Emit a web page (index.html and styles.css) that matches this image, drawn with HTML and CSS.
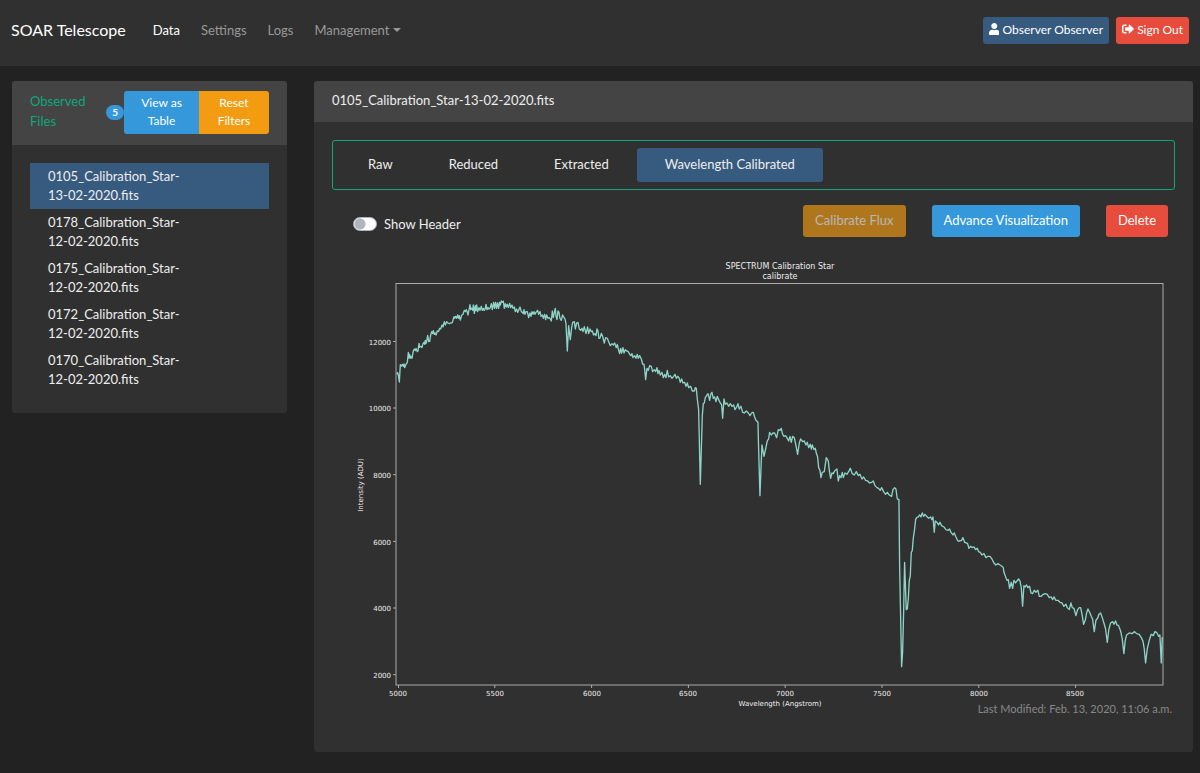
FILE: index.html
```html
<!DOCTYPE html>
<html lang="en">
<head>
    <meta charset="UTF-8">
    <meta name="viewport" content="width=device-width, initial-scale=1.0">
    <title>SOAR Telescope</title>
    <link rel="stylesheet" href="styles.css">
</head>
<body>

    <nav class="navbar">
        <a class="brand" href="#">SOAR Telescope</a>
        <a class="nav-link active" href="#">Data</a>
        <a class="nav-link" href="#">Settings</a>
        <a class="nav-link" href="#">Logs</a>
        <button type="button" class="nav-link dropdown">Management</button>
        <div class="nav-right">
            <button type="button" class="btn btn-sm primary">
                <svg class="icon" viewBox="0 0 448 512"><path d="M224 256c70.700 0 128-57.300 128-128S294.700 0 224 0 96 57.300 96 128s57.300 128 128 128zm89.600 32h-16.700c-22.200 10.200-46.900 16-72.900 16s-50.600-5.800-72.900-16h-16.700C60.200 288 0 348.200 0 422.400V464c0 26.500 21.500 48 48 48h352c26.500 0 48-21.500 48-48v-41.600c0-74.200-60.200-134.400-134.400-134.400z"/></svg>
                Observer Observer
            </button>
            <button type="button" class="btn btn-sm danger">
                <svg class="icon" viewBox="0 0 512 512"><path d="M497 273L329 441c-15 15-41 4.500-41-17v-96H152c-13.300 0-24-10.700-24-24v-96c0-13.300 10.700-24 24-24h136V88c0-21.400 25.900-32 41-17l168 168c9.300 9.400 9.300 24.600 0 34zM192 436v-40c0-6.600-5.400-12-12-12H96c-17.700 0-32-14.300-32-32V160c0-17.700 14.300-32 32-32h84c6.600 0 12-5.400 12-12V76c0-6.600-5.400-12-12-12H96c-53 0-96 43-96 96v192c0 53 43 96 96 96h84c6.600 0 12-5.400 12-12z"/></svg>
                Sign Out
            </button>
        </div>
    </nav>

    <main class="content">
        <aside class="card">
            <div class="card-header files-header">
                <span class="files-title">Observed Files</span>
                <span class="badge">5</span>
                <div class="btn-group">
                    <button type="button" class="btn btn-sm info">View as Table</button>
                    <button type="button" class="btn btn-sm warning">Reset Filters</button>
                </div>
            </div>
            <div class="file-list">
                <a class="file active" href="#"><span>0105_Calibration_Star-13-02-2020.fits</span></a>
                <a class="file" href="#"><span>0178_Calibration_Star-12-02-2020.fits</span></a>
                <a class="file" href="#"><span>0175_Calibration_Star-12-02-2020.fits</span></a>
                <a class="file" href="#"><span>0172_Calibration_Star-12-02-2020.fits</span></a>
                <a class="file" href="#"><span>0170_Calibration_Star-12-02-2020.fits</span></a>
            </div>
        </aside>

        <section class="card">
            <div class="card-header">0105_Calibration_Star-13-02-2020.fits</div>
            <div class="card-body">
                <div class="tabs">
                    <a class="tab" href="#">Raw</a>
                    <a class="tab" href="#">Reduced</a>
                    <a class="tab" href="#">Extracted</a>
                    <a class="tab active" href="#">Wavelength Calibrated</a>
                </div>

                <div class="actions">
                    <div class="header-toggle">
                        <input type="checkbox" class="switch" id="showHeader">
                        <label for="showHeader">Show Header</label>
                    </div>
                    <div class="action-buttons">
                        <button type="button" class="btn warning" disabled>Calibrate Flux</button>
                        <button type="button" class="btn info">Advance Visualization</button>
                        <button type="button" class="btn danger">Delete</button>
                    </div>
                </div>

                <svg class="plot" viewBox="332 250 843 450">
                    <text class="plot-title" x="780" y="270">SPECTRUM Calibration Star</text>
                    <text class="plot-title" x="780" y="280">calibrate</text>

                    <rect class="axis" x="396" y="284.500" width="767" height="401.500"/>
                    <path class="axis" d="M398.500 686v3M494.800 686v3M591.600 686v3M688.400 686v3M785.200 686v3M882 686v3M978.800 686v3M1075.600 686v3"/>
                    <path class="axis" d="M396 342.500h-3M396 409h-3M396 475.700h-3M396 542.400h-3M396 609h-3M396 675.700h-3"/>

                    <g class="x-labels">
                        <text x="398" y="697">5000</text>
                        <text x="495" y="697">5500</text>
                        <text x="592" y="697">6000</text>
                        <text x="688" y="697">6500</text>
                        <text x="785" y="697">7000</text>
                        <text x="882" y="697">7500</text>
                        <text x="979" y="697">8000</text>
                        <text x="1075" y="697">8500</text>
                        <text x="780" y="707">Wavelength (Angstrom)</text>
                        <text transform="translate(363 486) rotate(-90)">Intensity (ADU)</text>
                    </g>
                    <g class="y-labels">
                        <text x="391" y="346">12000</text>
                        <text x="391" y="412">10000</text>
                        <text x="391" y="479">8000</text>
                        <text x="391" y="546">6000</text>
                        <text x="391" y="612">4000</text>
                        <text x="391" y="679">2000</text>
                    </g>

                    <!-- spectrum, drawn in four stretches -->
                    <g class="spectrum" transform="translate(350 250) scale(0.3333)">
                        <polyline points="140,375 143,371 145,378 148,399 151,347 155,351 157,346 160,352 162,345 164,356 168,346 172,340 175,310 177,327 179,316 181,328 184,322 186,328 190,306 193,300 196,305 198,298 202,308 204,306 207,283 209,295 213,292 216,296 219,284 222,280 224,286 226,274 228,284 231,272 233,259 236,278 239,277 242,258 245,248 248,254 250,245 253,256 256,252 258,258 262,246 266,247 269,238 272,240 276,228 279,234 283,218 286,228 290,218 294,222 298,224 303,222 307,221 312,203 314,208 317,202 320,208 323,198 326,208 328,200 331,213 335,199 339,196 343,184 346,188 349,182 352,190 354,198 357,183 360,167 362,182 365,177 368,184 370,168 373,193 376,170 378,185 380,168 383,188 387,176 390,184 394,172 397,184 400,178 403,184 406,178 408,166 411,182 414,176 417,180 421,176 424,164 427,182 431,160 434,178 437,160 440,178 443,162 446,178 449,160 451,168 454,156 457,160 460,157 463,178 466,164 469,174 472,166 475,176 479,163 482,176 486,168 489,178 493,174 496,188 500,180 503,190 506,184 510,174 514,188 517,190 520,194 522,182 525,196 528,188 532,188 536,206 540,192 543,202 546,188 549,196 552,188 555,196 558,190 563,184 566,196 570,188 573,202 577,198 580,208 584,196 587,212 590,198 594,208 598,206 602,212 604,216 607,186 610,206 613,190 616,178 618,202 621,212 624,186 627,190 630,208 634,214 638,198 641,204 645,210 648,224 652,306 656,230 661,272 665,236 668,220 673,218 676,240 680,222 684,220 688,240 692,244 696,238 699,248 703,233 708,254 713,234 716,254 720,240 724,248 727,246 731,258 735,254 738,260 741,240 744,246 747,268 750,268"/>
                        <polyline transform="translate(750 0)" points="0,268 4,253 8,262 13,282 17,266 22,268 26,278 31,290 36,284 40,288 44,282 49,296 52,286 55,300 59,314 62,298 65,312 69,296 72,312 76,302 80,306 85,308 89,316 93,320 96,314 99,326 104,320 108,328 112,316 115,328 119,320 124,330 128,345 132,346 134,360 137,392 141,358 145,364 149,350 154,352 158,368 163,362 167,368 171,356 174,374 177,364 181,378 186,370 190,386 194,376 198,386 202,364 206,384 211,380 216,388 221,382 225,376 229,388 233,382 237,386 241,400 245,390 249,402 254,400 258,412 262,402 266,416 272,412 277,426 283,426 286,416 289,418 292,450 296,482 301,706 307,500 310,464 313,462 316,446 321,438 324,434 329,454 333,434 336,430 340,448 344,444 348,458 352,442 356,452 361,462 365,468 368,508 372,450 376,466 381,462 386,472 391,464 396,472 401,468 405,482 410,474 414,464 418,480 423,472 428,490 433,492 439,486 445,492 450,500 455,492 460,490 464,504 468,514 474,520 476,600 480,740 483,660 486,588 492,622 497,600 502,576 506,570 509,550 514,558 519,552 524,552 530,566 535,542 540,544 544,538 548,556 552,562 557,560 562,568 566,576 570,562 574,580 578,562 583,566 588,590 593,616 598,582 602,570 608,578 613,576 618,588 622,580 626,596 631,586 634,600 637,588 642,602 646,598 649,612 653,624 656,656 660,664 663,686 667,670 673,668 677,640 679,626 685,636 688,664 692,688 696,672 700,674 704,666 711,660 715,696 719,680 723,686 727,670 730,686 735,672 741,676 748,664 751,658 757,674 763,678 769,668 775,680 780,676 786,690 791,684 797,694 803,696 809,702 815,700 820,696 825,710 831,716 836,718 841,724 845,716 851,728 857,736 862,730 868,738 875,742 879,722 884,716 888,720 892,750 897,752"/>
                        <polyline transform="translate(1350 450)" points="297,300 299,500 305,803 308,760 311,640 314,490 319,632 322,630 325,600 328,545 331,530 334,460 337,455 340,418 344,390 347,362 350,356 355,354 359,348 363,354 367,342 371,352 375,346 380,352 386,358 392,354 396,362 399,354 403,400 406,366 411,370 416,378 420,370 425,380 432,384 438,392 445,394 449,390 453,400 459,408 463,402 468,414 474,426 480,426 485,424 489,416 494,430 499,432 503,434 507,448 512,442 517,446 522,444 527,452 532,448 536,458 541,460 546,468 552,464 558,476 564,472 570,472 576,480 582,492 588,498 594,494 600,498"/>
                        <polyline transform="translate(1830 810)" points="120,138 126,142 130,146 132,160 138,176 141,184 145,182 149,208 154,190 158,208 162,184 167,192 171,186 176,180 180,186 184,206 188,262 192,200 196,204 200,198 204,206 209,202 213,222 218,224 223,214 228,220 234,214 238,232 244,232 250,226 256,224 262,226 268,236 274,234 278,242 282,234 288,244 294,244 300,250 306,252 312,262 318,256 322,266 328,272 333,252 337,266 342,268 348,290 353,272 358,266 362,266 366,284 371,316 376,304 380,282 384,270 389,280 394,292 398,300 403,338 408,304 413,298 417,286 422,282 427,296 432,312 437,330 442,370 447,330 452,312 458,308 462,316 467,306 471,318 476,320 482,336 487,360 492,404 496,364 500,348 508,342 516,344 524,338 530,344 538,346 544,356 549,366 553,390 557,432 562,390 568,364 574,346 580,350 585,338 590,340 596,352 600,348 604,432 607,354"/>
                    </g>
                </svg>

                <p class="modified">Last Modified: Feb. 13, 2020, 11:06 a.m.</p>
            </div>
        </section>
    </main>

</body>
</html>
```
FILE: styles.css
```css
* {
    box-sizing: border-box;
}
body {
    margin: 0;
    background: #222;
    color: #eee;
    font-family: Lato, sans-serif;
    font-size: 13px;
    line-height: 20px;
}
a {
    color: inherit;
    text-decoration: none;
}
button {
    font-family: inherit;
    cursor: pointer;
}

/* top bar */
.navbar {
    display: flex;
    align-items: center;
    height: 66px;
    padding: 0 11px 6px;
    background: #303030;
}
.brand {
    margin-right: 20px;
    color: #fff;
    font-size: 16px;
}
.nav-link {
    padding: 0 7px;
    margin-right: 7px;
    border: none;
    background: none;
    color: #999;
    font-size: 13px;
}
.nav-link.active {
    color: #fff;
}
.dropdown::after {
    content: "";
    display: inline-block;
    margin-left: 4px;
    vertical-align: 3px;
    border: 4px solid transparent;
    border-top-color: #999;
    border-bottom: none;
}
.nav-right {
    display: flex;
    gap: 7px;
    margin-left: auto;
}

/* buttons */
.btn {
    padding: 5px 12px 7px;
    border: none;
    border-radius: 3px;
    color: #fff;
    font-size: 13px;
    line-height: 20px;
}
.btn-sm {
    padding: 4px 6px 5px;
    font-size: 12px;
    line-height: 18px;
}
.btn:disabled {
    opacity: 0.65;
}
.primary {
    background: #375a7f;
}
.info {
    background: #3498db;
}
.warning {
    background: #f39c12;
}
.danger {
    background: #e74c3c;
}
.icon {
    height: 12px;
    vertical-align: -1px;
    fill: #fff;
}

/* cards */
.content {
    display: grid;
    grid-template-columns: 275px 1fr;
    align-items: start;
    gap: 27px;
    padding: 15px 7px 20px 12px;
}
.card {
    min-width: 0;
    border-radius: 3px;
    background: #303030;
    overflow: hidden;
}
.card-header {
    padding: 9px 18px 12px;
    background: #444;
}
.card-body {
    padding: 18px 18px 33px;
}

/* file list */
.files-header {
    display: flex;
    align-items: center;
    padding: 10px 18px 11px;
}
.files-title {
    flex: 1;
    align-self: flex-start;
    padding-right: 10px;
    color: #0fa67d;
}
.badge {
    padding: 0 6px;
    border-radius: 8px;
    background: #3498db;
    color: #fff;
    font-size: 10px;
    font-weight: bold;
    line-height: 15px;
}
.btn-group {
    display: flex;
    width: 145px;
}
.btn-group .btn {
    flex: 1 1 auto;
    width: 70px;
    padding: 3px 14px 4px;
}
.btn-group .btn:first-child {
    width: 75px;
    border-radius: 3px 0 0 3px;
}
.btn-group .btn:last-child {
    border-radius: 0 3px 3px 0;
}
.file-list {
    padding: 18px 18px 20px;
}
.file {
    display: block;
    padding: 4px 18px;
    line-height: 19px;
}
.file span {
    display: block;
    max-width: 150px;
}
.file.active {
    background: #375a7f;
}

/* tabs */
.tabs {
    display: flex;
    padding: 7px;
    border: 1px solid #0fa67d;
    border-radius: 3px;
}
.tab {
    padding: 6px 28px 8px;
    border-radius: 3px;
}
.tab.active {
    background: #375a7f;
}

/* switch and action buttons */
.actions {
    display: flex;
    align-items: center;
    padding: 15px 7px 12px 21px;
}
.header-toggle {
    display: flex;
    align-items: center;
    padding-top: 5px;
}
.switch {
    appearance: none;
    width: 24px;
    height: 14px;
    margin: 0 7px 0 0;
    border: 1px solid #adb5bd;
    border-radius: 7px;
    background: radial-gradient(circle at 6px 6px, #adb5bd 5px, #fff 6px);
}
.switch:checked {
    background: radial-gradient(circle at 16px 6px, #fff 5px, #375a7f 6px);
}
.action-buttons {
    display: flex;
    gap: 26px;
    margin-left: auto;
}

/* plot */
.plot {
    display: block;
    width: 100%;
    overflow: visible;
    fill: #eee;
    font-family: "DejaVu Sans", sans-serif;
    font-size: 7px;
}
.plot-title {
    font-size: 8px;
    text-anchor: middle;
}
.x-labels {
    text-anchor: middle;
}
.y-labels {
    text-anchor: end;
}
.axis {
    fill: none;
    stroke: #aaa;
}
.spectrum {
    fill: none;
    stroke: #8dd3c7;
    stroke-width: 4;
    stroke-linejoin: round;
}
.modified {
    margin: 0;
    padding-right: 3px;
    color: #888;
    font-size: 11px;
    text-align: right;
}
```
